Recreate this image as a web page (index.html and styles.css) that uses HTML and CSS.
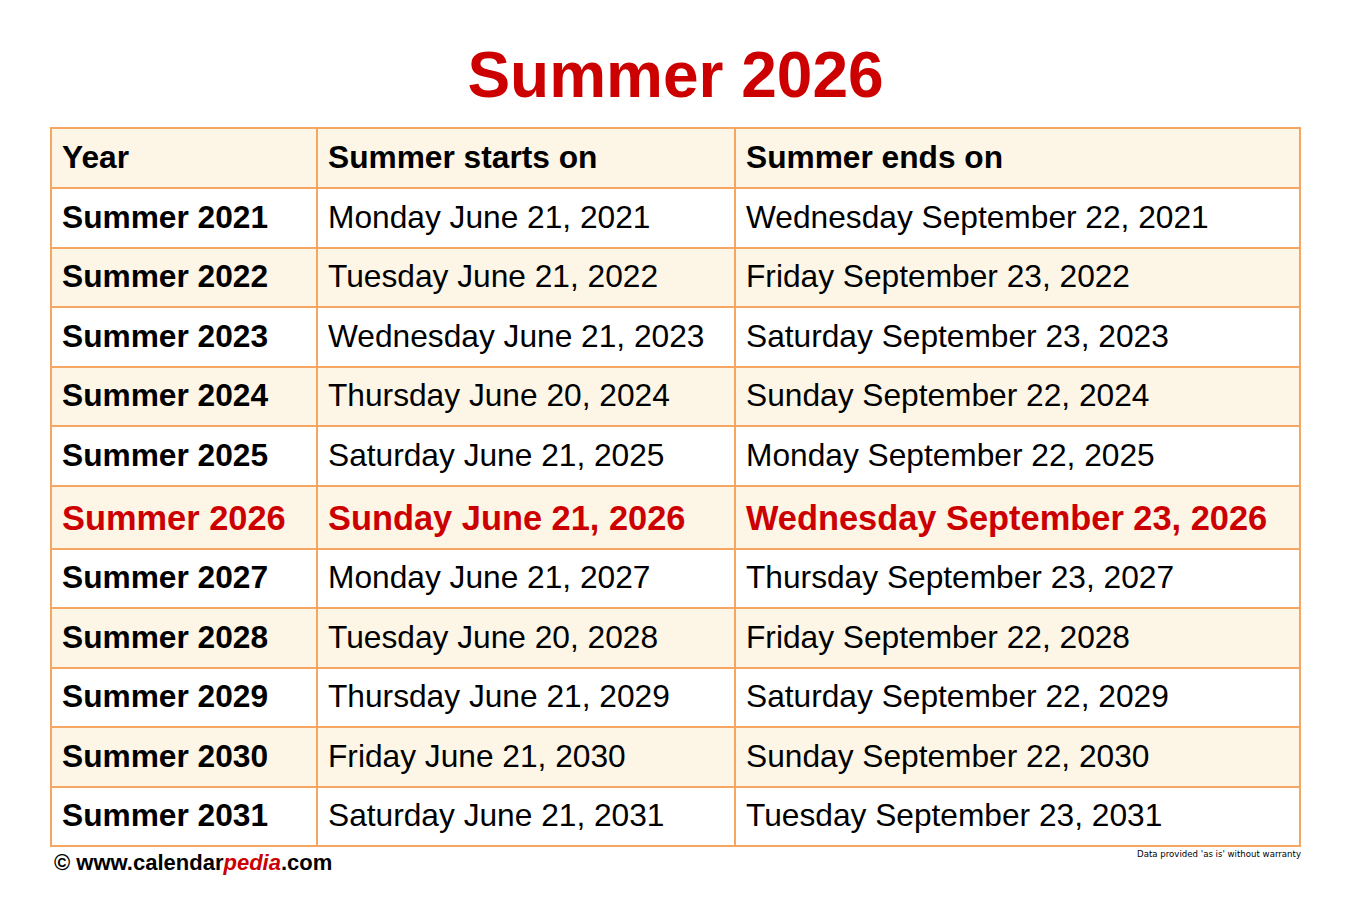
FILE: index.html
```html
<!DOCTYPE html>
<html>
<head>
<meta charset="utf-8">
<title>Summer 2026</title>
<link rel="stylesheet" href="styles.css">
</head>
<body>
<div class="page">
  <h1 class="title">Summer 2026</h1>
  <table class="cal">
    <colgroup>
      <col class="c1"><col class="c2"><col class="c3">
    </colgroup>
    <tr class="shade head"><td>Year</td><td>Summer starts on</td><td>Summer ends on</td></tr>
    <tr><td class="yr">Summer 2021</td><td>Monday June 21, 2021</td><td>Wednesday September 22, 2021</td></tr>
    <tr class="shade"><td class="yr">Summer 2022</td><td>Tuesday June 21, 2022</td><td>Friday September 23, 2022</td></tr>
    <tr><td class="yr">Summer 2023</td><td>Wednesday June 21, 2023</td><td>Saturday September 23, 2023</td></tr>
    <tr class="shade"><td class="yr">Summer 2024</td><td>Thursday June 20, 2024</td><td>Sunday September 22, 2024</td></tr>
    <tr><td class="yr">Summer 2025</td><td>Saturday June 21, 2025</td><td>Monday September 22, 2025</td></tr>
    <tr class="shade hl"><td class="yr">Summer 2026</td><td>Sunday June 21, 2026</td><td>Wednesday September 23, 2026</td></tr>
    <tr><td class="yr">Summer 2027</td><td>Monday June 21, 2027</td><td>Thursday September 23, 2027</td></tr>
    <tr class="shade"><td class="yr">Summer 2028</td><td>Tuesday June 20, 2028</td><td>Friday September 22, 2028</td></tr>
    <tr><td class="yr">Summer 2029</td><td>Thursday June 21, 2029</td><td>Saturday September 22, 2029</td></tr>
    <tr class="shade"><td class="yr">Summer 2030</td><td>Friday June 21, 2030</td><td>Sunday September 22, 2030</td></tr>
    <tr><td class="yr">Summer 2031</td><td>Saturday June 21, 2031</td><td>Tuesday September 23, 2031</td></tr>
  </table>
  <div class="foot">
    <div class="brand">&copy; www.calendar<span class="pedia">pedia</span>.com</div>
    <div class="note">Data provided 'as is' without warranty</div>
  </div>
</div>
</body>
</html>
```

FILE: styles.css
```css
html, body {
  margin: 0;
  padding: 0;
  background: #ffffff;
}

body {
  font-family: "Liberation Sans", Arial, sans-serif;
  color: #000000;
}

.page {
  padding: 0 50px 0 50px;
  width: 1251px;
}

.title {
  margin: 43px 0 20px 0;
  font-size: 64px;
  line-height: 64px;
  height: 64px;
  font-weight: bold;
  color: #cc0000;
  text-align: center;
}

.cal {
  border-collapse: collapse;
  width: 1251px;
  table-layout: fixed;
}

.c1 { width: 266px; }
.c2 { width: 418px; }
.c3 { width: auto; }

.cal td {
  border: 2px solid #f5a662;
  padding: 0 0 0 10px;
  height: 59.5px;
  box-sizing: border-box;
  font-size: 31.7px;
  line-height: 1;
  vertical-align: middle;
  white-space: nowrap;
}

.cal tr.shade td {
  background: #fdf5e6;
}

.cal tr.head td {
  font-weight: bold;
  height: 60px;
}

.cal td.yr {
  font-weight: bold;
}

.cal tr.hl td {
  height: 63px;
  color: #cc0000;
  font-weight: bold;
  font-size: 34.4px;
  padding-top: 2px;
}

.foot {
  display: flex;
  justify-content: space-between;
  align-items: flex-start;
  width: 1251px;
}

.brand {
  font-size: 22px;
  font-weight: bold;
  line-height: 26px;
  padding-left: 4px;
  margin-top: 3px;
}

.pedia {
  color: #cc0000;
  font-style: italic;
}

.note {
  font-family: "DejaVu Sans", Verdana, sans-serif;
  font-size: 8.6px;
  line-height: 10px;
  margin-top: 2px;
  color: #000000;
}
```
